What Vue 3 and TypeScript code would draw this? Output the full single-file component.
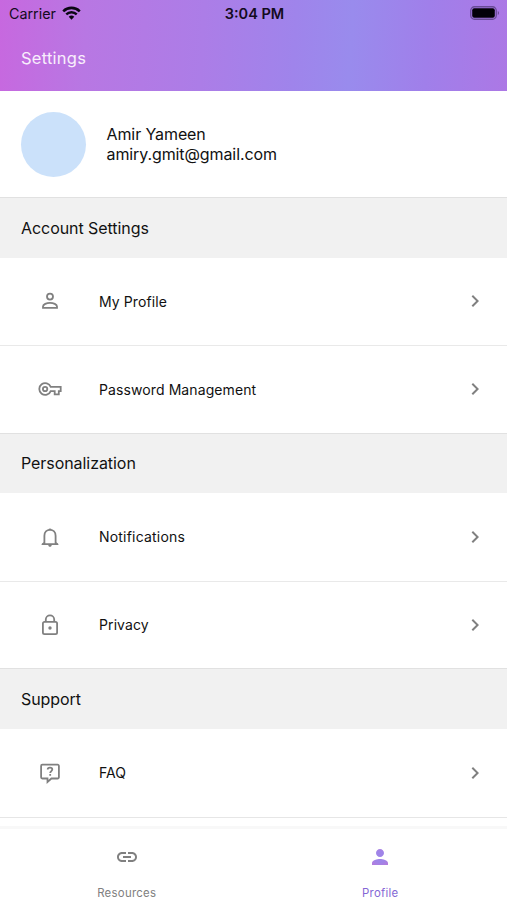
<script setup lang="ts">
interface Row {
  label: string
  icon: 'person' | 'key' | 'bell' | 'lock' | 'question'
  spacing: 'normal' | 'wide' | 'wider'
}

interface Section {
  title: string
  rows: Row[]
}

const sections: Section[] = [
  {
    title: 'Account Settings',
    rows: [
      { label: 'My Profile', icon: 'person', spacing: 'wide' },
      { label: 'Password Management', icon: 'key', spacing: 'wide' },
    ],
  },
  {
    title: 'Personalization',
    rows: [
      { label: 'Notifications', icon: 'bell', spacing: 'wider' },
      { label: 'Privacy', icon: 'lock', spacing: 'wide' },
    ],
  },
  {
    title: 'Support',
    rows: [{ label: 'FAQ', icon: 'question', spacing: 'normal' }],
  },
]
</script>

<template>
  <div class="screen">
    <header class="header">
      <div class="status">
        <div class="carrier">
          <span class="carrier-name">Carrier</span>
          <svg class="wifi" viewBox="0 0 20 14" fill="none" stroke="#0b0713">
            <path d="M1.3 5.2a12.4 12.4 0 0 1 17.4 0" stroke-width="2.7" />
            <path d="M4.5 8.5a7.8 7.8 0 0 1 11 0" stroke-width="2.5" />
            <path d="M10 14l-2.9-3a4.1 4.1 0 0 1 5.8 0z" fill="#0b0713" stroke="none" />
          </svg>
        </div>
        <time class="clock">3:04 PM</time>
        <svg class="battery" viewBox="0 0 30 14">
          <rect x=".75" y=".75" width="25.5" height="12.5" rx="3.8" fill="none" stroke="#2a1c45" stroke-opacity=".5" stroke-width="1.3" />
          <rect x="2.2" y="2.3" width="22.6" height="9.4" rx="2" fill="#030107" />
          <path d="M27.8 5v4c1.6-.5 1.6-3.5 0-4z" fill="#2a1c45" fill-opacity=".5" />
        </svg>
      </div>
      <h1 class="title">Settings</h1>
    </header>

    <main class="content">
      <section class="user">
        <div class="avatar"></div>
        <div class="identity">
          <div>Amir Yameen</div>
          <div>amiry.gmit@gmail.com</div>
        </div>
      </section>

      <section v-for="section in sections" :key="section.title" class="group">
        <h2 class="group-title">{{ section.title }}</h2>
        <div v-for="row in section.rows" :key="row.label" class="row">
          <svg class="icon" viewBox="0 0 24 24">
            <template v-if="row.icon === 'person'">
              <circle cx="12" cy="7.6" r="3" />
              <path d="M5 18.9v-1.4c0-2.2 3.6-3.7 7-3.7s7 1.5 7 3.7v1.4z" />
            </template>
            <template v-else-if="row.icon === 'key'">
              <path d="M12.7 9.9h10v4.2h-1.9v3.2h-4.1v-3.2h-4a5.9 5.9 0 1 1 0-4.2z" />
              <circle cx="7.1" cy="12" r="2.2" />
            </template>
            <template v-else-if="row.icon === 'bell'">
              <path d="M4.4 19.2h15.2M6.4 19V10.8C6.4 7.2 8.7 4.8 12 4.8s5.6 2.4 5.6 6V19" />
              <path class="solid" d="M10.3 4.9a1.75 1.75 0 0 1 3.4 0zM10.2 20.1h3.6a1.8 1.8 0 0 1-3.6 0zM3.6 19.9v-.8l2.2-2v2.8zM20.4 19.9v-.8l-2.2-2v2.8z" />
            </template>
            <template v-else-if="row.icon === 'lock'">
              <rect x="4.9" y="8.9" width="14.2" height="12.2" rx="1.6" />
              <path d="M7.8 8.9V6.5a4.2 4.2 0 0 1 8.4 0v2.4" />
              <circle class="solid" cx="12" cy="15" r="1.7" />
            </template>
            <template v-else>
              <path d="M4.3 3.7h15.4a1.2 1.2 0 0 1 1.2 1.2v11.4a1.2 1.2 0 0 1-1.2 1.2h-6.3L9.5 21v-3.5H4.3a1.2 1.2 0 0 1-1.2-1.2V4.9a1.2 1.2 0 0 1 1.2-1.2z" />
              <path d="M9.7 8.5c0-1.2 1-1.8 2.3-1.8s2.3.7 2.3 1.8c0 1.5-2.1 1.7-2.1 3.6M12.2 13.1v1.7" />
            </template>
          </svg>
          <span class="label" :class="row.spacing">{{ row.label }}</span>
          <svg class="chevron" viewBox="0 0 24 24">
            <path d="M8.59 16.59 13.17 12 8.59 7.41 10 6l6 6-6 6z" />
          </svg>
        </div>
      </section>
    </main>

    <nav class="tabs">
      <a class="tab">
        <svg class="tab-icon" viewBox="0 0 24 24">
          <path d="M3.9 12c0-1.71 1.39-3.1 3.1-3.1h4V7H7c-2.76 0-5 2.24-5 5s2.24 5 5 5h4v-1.9H7c-1.71 0-3.1-1.39-3.1-3.1zM8 13h8v-2H8v2zm9-6h-4v1.9h4c1.71 0 3.1 1.39 3.1 3.1s-1.39 3.1-3.1 3.1h-4V17h4c2.76 0 5-2.24 5-5s-2.24-5-5-5z" />
        </svg>
        <span>Resources</span>
      </a>
      <a class="tab active">
        <svg class="tab-icon" viewBox="0 0 24 24">
          <defs>
            <radialGradient id="person-fill" cx="12" cy="12" r="11" gradientUnits="userSpaceOnUse">
              <stop offset=".5" stop-color="#9f84e8" />
              <stop offset="1" stop-color="#b57bdc" />
            </radialGradient>
          </defs>
          <path fill="url(#person-fill)" d="M12 12c2.21 0 4-1.79 4-4s-1.79-4-4-4-4 1.79-4 4 1.79 4 4 4zm0 2c-2.67 0-8 1.34-8 4v2h16v-2c0-2.66-5.33-4-8-4z" />
        </svg>
        <span>Profile</span>
      </a>
    </nav>
  </div>
</template>

<style>
body {
  background: #fff;
}
</style>

<style scoped>
.screen {
  display: flex;
  flex-direction: column;
  width: 507px;
  height: 900px;
  overflow: hidden;
  background: #fff;
  color: #111;
  font-family: Inter, "Liberation Sans", sans-serif;
}

.header {
  flex: none;
  height: 91px;
  background: linear-gradient(93deg, #c768df 0%, #b877e3 17%, #ac7de7 40%, #9f84eb 58%, #998bed 69%, #a07fea 84%, #ac78e5 100%);
}

.status {
  display: grid;
  grid-template-columns: 1fr auto 1fr;
  align-items: center;
  height: 27px;
  padding: 0 7px 0 9px;
  color: #130b20;
}

.carrier {
  display: flex;
  align-items: center;
  gap: 6px;
  font-size: 14.3px;
}

.wifi {
  width: 19px;
  height: 14px;
  margin-top: -2px;
}

.clock {
  font-size: 14.5px;
  font-weight: 600;
}

.battery {
  justify-self: end;
  width: 30px;
  height: 14px;
  margin-top: -1px;
}

.title {
  margin: 0;
  padding: 21px 21px 0;
  color: #f8eefc;
  font-size: 16.5px;
  font-weight: 400;
  line-height: 20px;
  letter-spacing: 0.25px;
}

.content {
  flex: none;
  height: 735px;
  overflow: hidden;
}

.user {
  display: flex;
  align-items: center;
  gap: 20.5px;
  box-sizing: border-box;
  height: 106px;
  padding: 0 21px;
}

.avatar {
  width: 65px;
  height: 65px;
  border-radius: 50%;
  background: #cbe1fa;
}

.identity {
  font-size: 16px;
  line-height: 20px;
  letter-spacing: -0.1px;
}

.group-title {
  display: flex;
  align-items: center;
  box-sizing: border-box;
  height: 60.5px;
  margin: 0;
  padding: 0 21px;
  border-top: 1px solid #e1e1e1;
  background: #f1f1f1;
  font-size: 16px;
  font-weight: 400;
  letter-spacing: -0.06px;
}

.row {
  display: flex;
  align-items: center;
  box-sizing: border-box;
  height: 87.5px;
  padding: 0 20px 0 37.5px;
  font-size: 14px;
}

.row + .row {
  border-top: 1px solid #e9e9e9;
}

.group:last-child .row {
  height: 89px;
  border-bottom: 1px solid #e6e6e6;
}

.icon {
  flex: none;
  width: 24px;
  height: 24px;
  fill: none;
  stroke: #808080;
  stroke-width: 1.8;
}

.solid {
  fill: #808080;
  stroke: none;
}

.chevron,
.tab-icon {
  flex: none;
  width: 24px;
  height: 24px;
  fill: #808080;
}

.label {
  flex: 1;
  margin-left: 37.5px;
}

.wide {
  letter-spacing: 0.1px;
}

.wider {
  letter-spacing: 0.2px;
}

.tabs {
  display: grid;
  grid-template-columns: 1fr 1fr;
  flex: 1;
  border-top: 3px solid #f8f8f8;
  background: #fff;
}

.tab {
  display: flex;
  flex-direction: column;
  align-items: center;
  gap: 16px;
  padding-top: 16px;
  color: #808080;
  font-size: 11.4px;
  line-height: 16px;
  letter-spacing: 0.28px;
}

.active {
  color: #8467d5;
}
</style>
